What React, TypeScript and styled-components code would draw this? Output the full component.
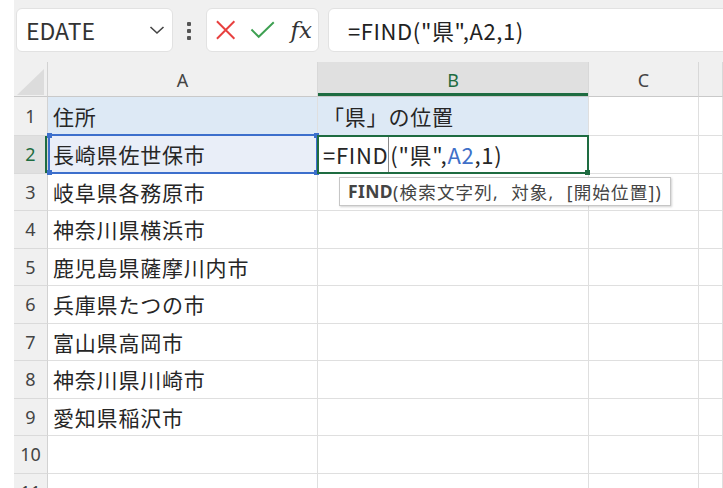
import React from 'react';
import styled, { createGlobalStyle } from 'styled-components';

const GlobalStyle = createGlobalStyle`
  html, body {
    margin: 0;
    padding: 0;
    background: #fff;
  }
`;

const CJK = `"Noto Sans CJK JP", "Noto Sans", sans-serif`;
const LATIN_FIRST = `"Noto Sans", "Noto Sans CJK JP", sans-serif`;

const Page = styled.div`
  width: 723px;
  height: 488px;
  overflow: hidden;
  background: #fff;
  padding-left: 14px;
  box-sizing: border-box;
  display: flex;
  flex-direction: column;
  font-family: ${CJK};
  color: #222;
`;

const Toolbar = styled.div`
  height: 62px;
  flex-shrink: 0;
  background: #f0f0f0;
  display: flex;
  align-items: flex-start;
  padding: 8px 0 0 2px;
  box-sizing: border-box;
`;

const Field = styled.div<{ $width?: number; $grow?: boolean }>`
  height: 44px;
  box-sizing: border-box;
  background: #fff;
  border: 1px solid #e2e2e2;
  border-radius: 6px;
  display: flex;
  align-items: center;
  flex-shrink: 0;
  width: ${({ $width }) => ($width ? `${$width}px` : 'auto')};
  flex-grow: ${({ $grow }) => ($grow ? 1 : 0)};
`;

const NameBox = styled(Field)`
  justify-content: space-between;
  padding: 0 7px 0 9px;
  font-size: 23px;
  color: #333;
`;

const Dots = styled.div`
  margin: 14px 15px 0 14px;
  width: 4px;
  display: flex;
  flex-direction: column;
  gap: 3px;
  & > span {
    width: 4px;
    height: 4px;
    border-radius: 1px;
    background: #555;
  }
`;

const FxBox = styled(Field)`
  padding: 0 6px 0 8px;
  gap: 14px;
`;

const FxLabel = styled.span`
  font-family: "DejaVu Serif", "Liberation Serif", serif;
  font-style: italic;
  font-size: 23px;
  color: #333;
  margin-left: 1px;
`;

const FormulaBox = styled(Field)`
  margin-left: 9px;
  margin-right: -10px;
  padding-left: 19px;
  font-size: 22px;
  letter-spacing: 0.6px;
  color: #222;
`;

const Sheet = styled.div`
  display: grid;
  grid-template-columns: 34px 270px 271px 110px 1fr;
  grid-template-rows: 35px 39px repeat(10, 37.5px);
`;

const Corner = styled.div`
  background: #f0f0f0;
  border-right: 1px solid #d2d2d2;
  border-bottom: 1px solid #c9c9c9;
  box-sizing: border-box;
  position: relative;
  &::after {
    content: '';
    position: absolute;
    left: 3px;
    top: 7px;
    width: 27px;
    height: 26px;
    background: #dcdcdc;
    clip-path: polygon(100% 0, 100% 100%, 0 100%);
  }
`;

const ColHead = styled.div<{ $active?: boolean }>`
  background: ${({ $active }) => ($active ? '#e0e0e0' : '#f0f0f0')};
  border-right: 1px solid #d8d8d8;
  border-bottom: 1px solid #c9c9c9;
  box-shadow: ${({ $active }) => ($active ? 'inset 0 -3px 0 #1e6c41' : 'none')};
  box-sizing: border-box;
  display: flex;
  align-items: center;
  justify-content: center;
  font-family: "Noto Sans", sans-serif;
  font-size: 18px;
  padding-top: 2px;
  color: ${({ $active }) => ($active ? '#1e6c41' : '#444')};
`;

const RowHead = styled.div<{ $active?: boolean }>`
  background: ${({ $active }) => ($active ? '#e0e0e0' : '#f0f0f0')};
  border-right: 1px solid #d2d2d2;
  border-bottom: 1px solid #dadada;
  box-shadow: ${({ $active }) => ($active ? 'inset -2px 0 0 #1e6c41' : 'none')};
  box-sizing: border-box;
  display: flex;
  align-items: center;
  justify-content: center;
  font-family: "Noto Sans", sans-serif;
  font-size: 18px;
  color: ${({ $active }) => ($active ? '#1e6c41' : '#444')};
`;

const Cell = styled.div<{ $fill?: string }>`
  position: relative;
  background: ${({ $fill }) => $fill || '#fff'};
  border-right: 1px solid #dfdfdf;
  border-bottom: 1px solid #dfdfdf;
  box-sizing: border-box;
  display: flex;
  align-items: center;
  padding-left: 5px;
  font-size: 21px;
  letter-spacing: 0.8px;
  white-space: nowrap;
  color: #262626;
`;

const RefBox = styled.div`
  position: absolute;
  top: -2px;
  left: 0;
  right: -1px;
  bottom: -1px;
  border: 2px solid #3c6fcc;
  pointer-events: none;
  z-index: 2;
`;

const Handle = styled.span<{ $pos: 'tl' | 'tr' | 'bl' | 'br'; $color: string }>`
  position: absolute;
  width: 5px;
  height: 5px;
  background: ${({ $color }) => $color};
  ${({ $pos }) => ($pos[0] === 't' ? 'top: -3px;' : 'bottom: -3px;')}
  ${({ $pos }) => ($pos[1] === 'l' ? 'left: -3px;' : 'right: -3px;')}
`;

const ActiveBox = styled.div`
  position: absolute;
  top: -1px;
  left: -1px;
  right: -1px;
  bottom: -1px;
  border: 2px solid #1e6c41;
  pointer-events: none;
  z-index: 3;
`;

const Formula = styled.span`
  font-size: 22px;
  letter-spacing: 0.7px;
  display: flex;
  align-items: center;
  height: 100%;
`;

const Ref = styled.span`
  color: #4070c8;
`;

const Caret = styled.span`
  display: inline-block;
  width: 1px;
  align-self: stretch;
  margin: 1px 1px 1px 0;
  background: #8a8a8a;
`;

const Tip = styled.div`
  position: absolute;
  left: 21px;
  top: 3px;
  height: 29px;
  box-sizing: border-box;
  padding: 0 8px;
  display: flex;
  align-items: center;
  background: #fff;
  border: 1px solid #c6c6c6;
  box-shadow: 1px 1px 2px rgba(0, 0, 0, 0.18);
  font-family: ${LATIN_FIRST};
  font-size: 17.5px;
  letter-spacing: 1.2px;
  word-spacing: 6.5px;
  color: #444;
  white-space: pre;
  z-index: 4;
  b {
    font-weight: 700;
    letter-spacing: 0.4px;
  }
`;

const HEADER_FILL = '#dde9f5';
const SELECT_FILL = '#e9eef8';

const addresses = [
  '長崎県佐世保市',
  '岐阜県各務原市',
  '神奈川県横浜市',
  '鹿児島県薩摩川内市',
  '兵庫県たつの市',
  '富山県高岡市',
  '神奈川県川崎市',
  '愛知県稲沢市',
];

const Chevron = () => (
  <svg width="16" height="10" viewBox="0 0 16 10" fill="none">
    <path d="M1.5 2 L8 8 L14.5 2" stroke="#444" strokeWidth="1.6" />
  </svg>
);

const CancelIcon = () => (
  <svg width="22" height="22" viewBox="0 0 22 22" fill="none">
    <path d="M2 2 L20 20 M20 2 L2 20" stroke="#e8403f" strokeWidth="2" />
  </svg>
);

const EnterIcon = () => (
  <svg width="26" height="18" viewBox="0 0 26 18" fill="none">
    <path d="M1.5 8.5 L9 16 L24.5 1" stroke="#3ea052" strokeWidth="2" />
  </svg>
);

const App: React.FC = () => {
  const rows: React.ReactNode[] = [];

  for (let r = 1; r <= 11; r++) {
    const text = r >= 2 && r <= 9 ? addresses[r - 2] : '';
    rows.push(
      <React.Fragment key={r}>
        <RowHead $active={r === 2}>{r}</RowHead>
        {r === 1 && (
          <>
            <Cell $fill={HEADER_FILL}>住所</Cell>
            <Cell $fill={HEADER_FILL}>「県」の位置</Cell>
          </>
        )}
        {r === 2 && (
          <>
            <Cell $fill={SELECT_FILL}>
              {text}
              <RefBox>
                <Handle $pos="tl" $color="#3c6fcc" />
                <Handle $pos="tr" $color="#3c6fcc" />
                <Handle $pos="bl" $color="#3c6fcc" />
                <Handle $pos="br" $color="#3c6fcc" />
              </RefBox>
            </Cell>
            <Cell>
              <Formula>
                =FIND<Caret />("県",<Ref>A2</Ref>,1)
              </Formula>
              <ActiveBox>
                <Handle $pos="br" $color="#1e6c41" />
              </ActiveBox>
            </Cell>
          </>
        )}
        {r === 3 && (
          <>
            <Cell>{text}</Cell>
            <Cell>
              <Tip>
                <b>FIND</b>(検索文字列, 対象, [開始位置])
              </Tip>
            </Cell>
          </>
        )}
        {r > 3 && (
          <>
            <Cell>{text}</Cell>
            <Cell />
          </>
        )}
        <Cell />
        <Cell />
      </React.Fragment>
    );
  }

  return (
    <Page>
      <GlobalStyle />
      <Toolbar>
        <NameBox $width={157}>
          EDATE
          <Chevron />
        </NameBox>
        <Dots>
          <span />
          <span />
          <span />
        </Dots>
        <FxBox $width={113}>
          <CancelIcon />
          <EnterIcon />
          <FxLabel>fx</FxLabel>
        </FxBox>
        <FormulaBox $grow>=FIND("県",A2,1)</FormulaBox>
      </Toolbar>
      <Sheet>
        <Corner />
        <ColHead>A</ColHead>
        <ColHead $active>B</ColHead>
        <ColHead>C</ColHead>
        <ColHead />
        {rows}
      </Sheet>
    </Page>
  );
};

export default App;
